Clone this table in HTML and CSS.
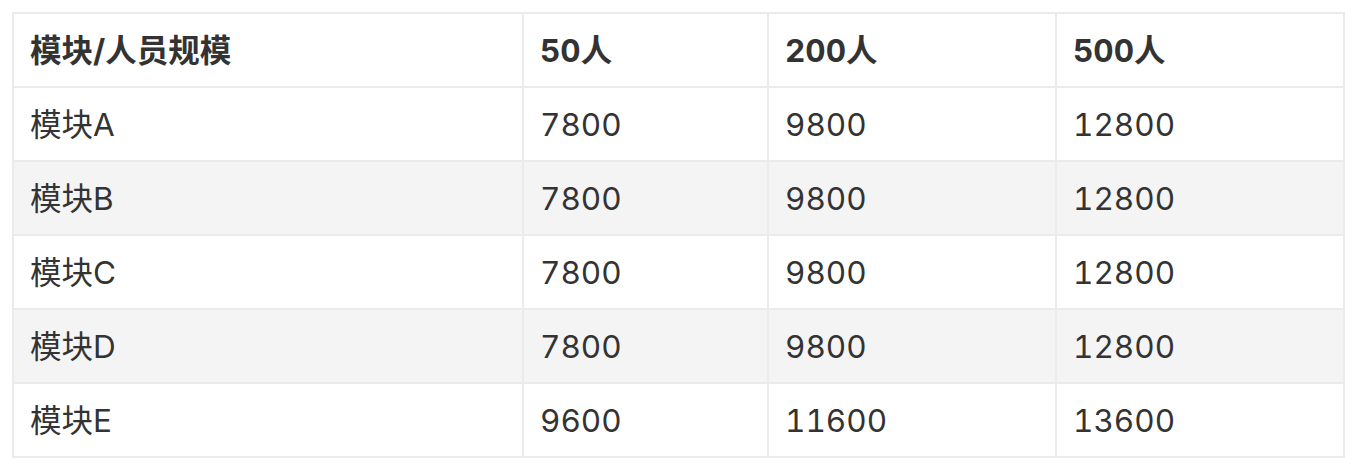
FILE: index.html
```html
<!DOCTYPE html>
<html lang="zh">
<head>
<meta charset="utf-8">
<link rel="stylesheet" href="styles.css">
</head>
<body>
<table class="price">
  <colgroup>
    <col class="c1"><col class="c2"><col class="c3"><col class="c4">
  </colgroup>
  <thead>
    <tr><th>模块/人员规模</th><th>50人</th><th>200人</th><th>500人</th></tr>
  </thead>
  <tbody>
    <tr><td>模块A</td><td>7800</td><td>9800</td><td>12800</td></tr>
    <tr><td>模块B</td><td>7800</td><td>9800</td><td>12800</td></tr>
    <tr><td>模块C</td><td>7800</td><td>9800</td><td>12800</td></tr>
    <tr><td>模块D</td><td>7800</td><td>9800</td><td>12800</td></tr>
    <tr><td>模块E</td><td>9600</td><td>11600</td><td>13600</td></tr>
  </tbody>
</table>
</body>
</html>
```
FILE: styles.css
```css
html, body {
  margin: 0;
  padding: 0;
  background: #ffffff;
}
body {
  padding: 12px;
  font-family: Inter, "Noto Sans CJK SC", sans-serif;
  font-variant-numeric: tabular-nums;
  font-feature-settings: "tnum" 1;
  color: #333333;
}
.price {
  border-collapse: collapse;
  width: 1331px;
  table-layout: fixed;
}
.c1 { width: 510px; }
.c2 { width: 245px; }
.c3 { width: 288px; }
.c4 { width: 288px; }
.price th,
.price td {
  border: 2px solid #ebebeb;
  height: 74px;
  padding: 2px 16px 0;
  text-align: left;
  vertical-align: middle;
  font-size: 31.5px;
  line-height: 38px;
  box-sizing: border-box;
}
.price th {
  font-weight: 700;
}
.price td {
  font-weight: 400;
}
.price tbody tr:nth-child(even) td {
  background: #f4f4f4;
}
```
